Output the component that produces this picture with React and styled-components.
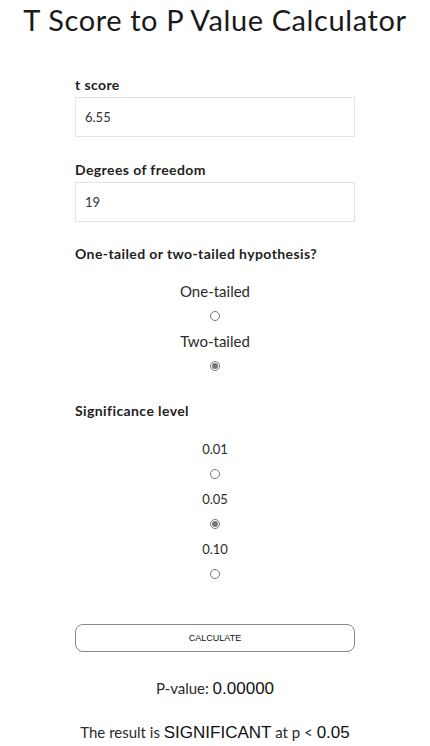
import React, { useState } from 'react';
import styled, { createGlobalStyle } from 'styled-components';

const GlobalStyle = createGlobalStyle`
  body {
    margin: 0;
    background: #fff;
    font-family: Lato, "Open Sans", sans-serif;
    color: #222;
  }
`;

const Page = styled.div`
  width: 430px;
  margin: 0 auto;
`;

const Title = styled.h1`
  margin: 0;
  font-size: 29px;
  font-weight: 400;
  letter-spacing: 0.6px;
  line-height: 40px;
  text-align: center;
  color: #1a1a1a;
`;

const Form = styled.div`
  width: 280px;
  margin: 0 auto;
  padding-top: 35px;
  display: flex;
  flex-direction: column;
`;

const Label = styled.div`
  font-size: 14px;
  font-weight: 700;
  letter-spacing: 0.4px;
  line-height: 20px;
  color: #1e1e1e;
  margin-top: ${({ $top }) => $top || 0}px;
`;

const Input = styled.input`
  box-sizing: border-box;
  width: 100%;
  height: 40px;
  margin-top: 2px;
  padding: 0 9px;
  border: 1px solid #e3e3e3;
  border-radius: 0;
  font-family: inherit;
  font-size: 13px;
  color: #333;
  outline: none;
`;

const Options = styled.div`
  display: flex;
  flex-direction: column;
  align-items: center;
  margin-top: ${({ $top }) => $top || 0}px;
`;

const Option = styled.label`
  display: flex;
  flex-direction: column;
  align-items: center;
  font-size: ${({ $small }) => ($small ? 13 : 15)}px;
  font-weight: 400;
  color: #2a2a2a;
  line-height: 20px;
`;

const RadioRow = styled.span`
  height: 30px;
  display: flex;
  align-items: center;
`;

const Radio = styled.input`
  width: 10px;
  height: 10px;
  margin: 0;
  accent-color: #777;
`;

const Button = styled.button`
  box-sizing: border-box;
  height: 28px;
  margin-top: 35px;
  width: 100%;
  background: #fff;
  border: 1px solid #888;
  border-radius: 8px;
  font-family: "Liberation Sans", Arial, sans-serif;
  font-size: 9px;
  color: #111;
  cursor: pointer;
`;

const Result = styled.div`
  text-align: center;
  line-height: 24px;
  font-size: 15px;
  font-weight: 400;
  color: #2a2a2a;
  margin-top: ${({ $top }) => $top}px;

  b {
    font-family: "Liberation Sans", Arial, sans-serif;
    font-weight: 400;
    font-size: 17px;
    color: #111;
  }
`;

const RadioGroup = ({ name, options, value, onChange, small, top }) => (
  <Options $top={top}>
    {options.map((opt) => (
      <Option key={opt} $small={small}>
        {opt}
        <RadioRow>
          <Radio
            type="radio"
            name={name}
            checked={value === opt}
            onChange={() => onChange(opt)}
          />
        </RadioRow>
      </Option>
    ))}
  </Options>
);

export default function App() {
  const [tails, setTails] = useState('Two-tailed');
  const [level, setLevel] = useState('0.05');

  return (
    <Page>
      <GlobalStyle />
      <Title>T Score to P Value Calculator</Title>
      <Form>
        <Label>t score</Label>
        <Input defaultValue="6.55" />
        <Label $top={23}>Degrees of freedom</Label>
        <Input defaultValue="19" />
        <Label $top={22}>One-tailed or two-tailed hypothesis?</Label>
        <RadioGroup
          name="tails"
          top={17}
          options={['One-tailed', 'Two-tailed']}
          value={tails}
          onChange={setTails}
        />
        <Label $top={20}>Significance level</Label>
        <RadioGroup
          name="level"
          small
          top={18}
          options={['0.01', '0.05', '0.10']}
          value={level}
          onChange={setLevel}
        />
        <Button type="button">CALCULATE</Button>
        <Result $top={24}>
          P-value: <b>0.00000</b>
        </Result>
        <Result $top={19}>
          The result is <b>SIGNIFICANT</b> at p &lt; <b>0.05</b>
        </Result>
      </Form>
    </Page>
  );
}
